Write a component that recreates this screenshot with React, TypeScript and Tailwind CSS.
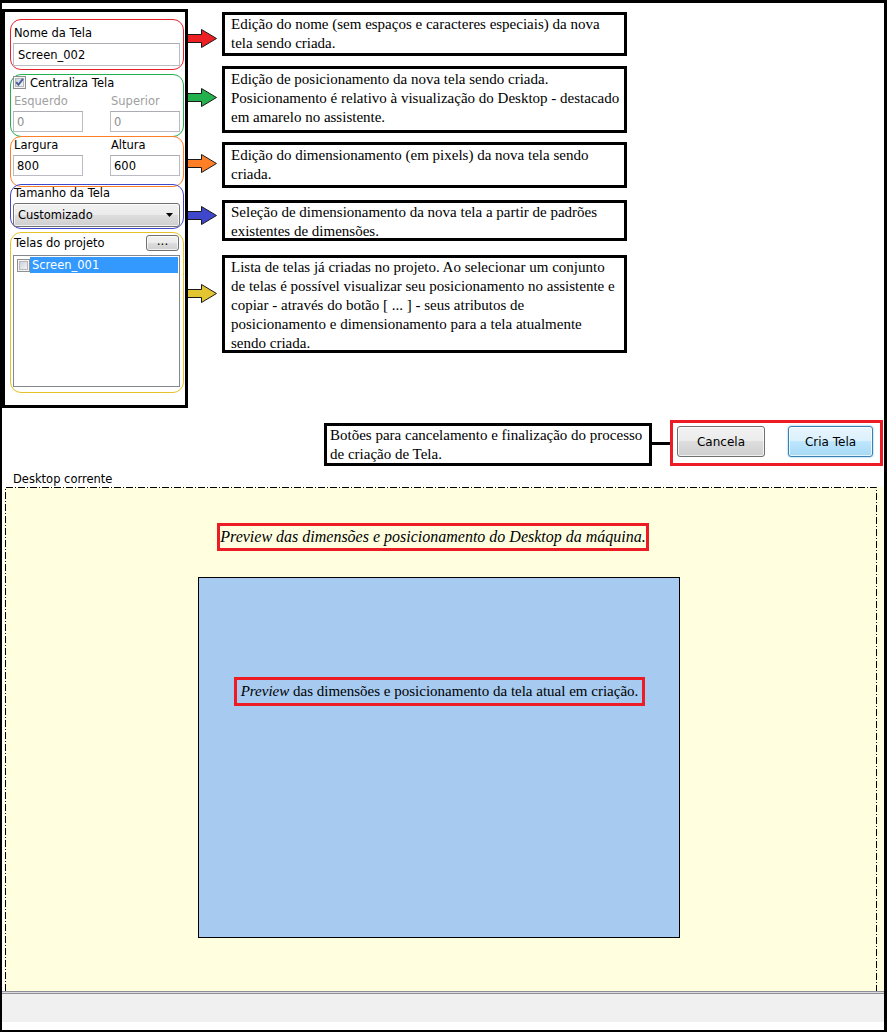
import React from "react";

const SANS = "font-['DejaVu_Sans',sans-serif]";
const SERIF = "font-['Liberation_Serif','Times_New_Roman',serif]";

function Arrow({ color }: { color: string }) {
  return (
    <svg width="29" height="19" viewBox="0 0 29 19" className="shrink-0 block">
      <path
        d="M0 5.5 H13.5 V0.5 L28.5 9.5 L13.5 18.5 V13.5 H0"
        fill={color}
        stroke="#1a1a1a"
        strokeWidth="1"
      />
    </svg>
  );
}

function CheckBox({ checked, id }: { checked?: boolean; id: string }) {
  return (
    <svg width="13" height="13" viewBox="0 0 13 13" className="shrink-0 block">
      <defs>
        <linearGradient id={id} x1="0" y1="0" x2="1" y2="1">
          <stop offset="0" stopColor="#cbcfd5" />
          <stop offset="1" stopColor="#f6f6f6" />
        </linearGradient>
      </defs>
      <rect x="0.5" y="0.5" width="12" height="12" fill="#f4f4f4" stroke="#8e8f8f" />
      <rect x="2.5" y="2.5" width="8" height="8" fill={`url(#${id})`} stroke="#b4b8be" />
      {checked && (
        <path d="M3.2 6.2 L5.4 8.8 L10 2.8" stroke="#4a5f9a" strokeWidth="1.9" fill="none" />
      )}
    </svg>
  );
}

function TextInput({ value, disabled, className }: { value: string; disabled?: boolean; className: string }) {
  return (
    <div
      className={`border border-[#b9bcc2] border-t-[#abadb3] bg-white flex items-center pl-[3px] text-[11.5px] ${
        disabled ? "text-[#8d8d8d]" : "text-black"
      } ${className}`}
    >
      {value}
    </div>
  );
}

const grayButton =
  "border border-[#707070] rounded-[3px] bg-[linear-gradient(#f2f2f2_0%,#ebebeb_50%,#dddddd_50%,#cfcfcf_100%)] shadow-[inset_0_0_0_1px_rgba(255,255,255,0.7)]";

function LeftPanel() {
  return (
    <div className={`mt-[6px] w-[186px] h-[399px] border-[3px] border-black flex flex-col pl-[5px] text-[11.5px] leading-[14px] ${SANS}`}>
      {/* Nome da Tela */}
      <div className="mt-[7px] w-[174px] h-[51px] border border-[#e8222a] rounded-[11px] pl-[2px] pt-[6px] shrink-0">
        <div className="pl-[1px]">Nome da Tela</div>
        <TextInput value="Screen_002" className="mt-[3px] w-[167px] h-[23px] pl-[4px]" />
      </div>

      {/* Posicionamento */}
      <div className="mt-[4px] w-[174px] h-[63px] border border-[#22b14c] rounded-[11px] pl-[2px] pt-[1px] shrink-0">
        <div className="flex items-center gap-[4px] h-[13px]">
          <CheckBox checked id="cbCentraliza" />
          <span>Centraliza Tela</span>
        </div>
        <div className="mt-[5px] grid grid-cols-[70px_70px] gap-x-[27px] text-[#a0a0a0]">
          <div className="pl-[1px]">Esquerdo</div>
          <div className="pl-[1px]">Superior</div>
        </div>
        <div className="mt-[3px] grid grid-cols-[70px_70px] gap-x-[27px]">
          <TextInput value="0" disabled className="h-[21px]" />
          <TextInput value="0" disabled className="h-[21px]" />
        </div>
      </div>

      {/* Dimensões */}
      <div className="-mt-[1px] w-[174px] h-[51px] border border-[#ff7f27] rounded-[11px] pl-[2px] pt-[1px] shrink-0">
        <div className="grid grid-cols-[70px_70px] gap-x-[27px]">
          <div className="pl-[1px]">Largura</div>
          <div className="pl-[1px]">Altura</div>
        </div>
        <div className="mt-[3px] grid grid-cols-[70px_70px] gap-x-[27px]">
          <TextInput value="800" className="h-[21px]" />
          <TextInput value="600" className="h-[21px]" />
        </div>
      </div>

      {/* Tamanho da Tela */}
      <div className="-mt-[3px] w-[174px] h-[45px] border border-[#3f48cc] rounded-[11px] pl-[2px] pt-[1px] shrink-0">
        <div className="pl-[1px]">Tamanho da Tela</div>
        <div className={`mt-[3px] w-[167px] h-[24px] flex items-center justify-between pl-[4px] pr-[6px] ${grayButton}`}>
          <span>Customizado</span>
          <svg width="7" height="4" viewBox="0 0 7 4" className="block">
            <path d="M0 0 H7 L3.5 4 Z" fill="#000" />
          </svg>
        </div>
      </div>

      {/* Telas do projeto */}
      <div className="mt-[3px] w-[174px] h-[161px] border border-[#e6c229] rounded-[11px] pl-[2px] pr-[4px] pt-[2px] shrink-0">
        <div className="flex items-center justify-between h-[16px]">
          <span className="pl-[1px]">Telas do projeto</span>
          <div className={`w-[33px] h-[16px] flex items-center justify-center text-[12px] leading-none pb-[4px] ${grayButton}`}>
            ...
          </div>
        </div>
        <div className="mt-[4px] w-[167px] h-[132px] border border-[#828790] bg-white pt-[1px] pl-[3px]">
          <div className="flex items-center">
            <CheckBox id="cbScreen001" />
            <div className="w-[148px] h-[16px] bg-[#3399ff] text-white pl-[2px] flex items-center">Screen_001</div>
          </div>
        </div>
      </div>
    </div>
  );
}

function Note({
  color,
  arrowTop,
  mt,
  h,
  pt,
  lines,
}: {
  color: string;
  arrowTop: number;
  mt: string;
  h: string;
  pt: string;
  lines: string[];
}) {
  return (
    <div className={`flex gap-[5px] ${mt}`}>
      <div style={{ marginTop: arrowTop }}>
        <Arrow color={color} />
      </div>
      <div className={`w-[405px] ${h} ${pt} border-[3px] border-black bg-white pl-[6px] text-[15px] leading-[19px] text-black whitespace-nowrap ${SERIF}`}>
        {lines.map((l, i) => (
          <div key={i}>{l}</div>
        ))}
      </div>
    </div>
  );
}

export default function App() {
  return (
    <div className="w-[887px] h-[1032px] bg-white border-t-[3px] border-r-[3px] border-b-2 border-l-2 border-black flex flex-col overflow-hidden">
      {/* Form and field descriptions */}
      <div className="flex h-[407px] shrink-0">
        <LeftPanel />
        <div className="flex flex-col pt-[9px]">
          <Note
            color="#ed2024"
            arrowTop={17}
            mt=""
            h="h-[44px]"
            pt="pt-0"
            lines={["Edição do nome (sem espaços e caracteres especiais) da nova", "tela sendo criada."]}
          />
          <Note
            color="#22b14c"
            arrowTop={22}
            mt="mt-[10px]"
            h="h-[67px]"
            pt="pt-[1px]"
            lines={[
              "Edição de posicionamento da nova tela sendo criada.",
              "Posicionamento é relativo à visualização do Desktop - destacado",
              "em amarelo no assistente.",
            ]}
          />
          <Note
            color="#ff7f27"
            arrowTop={12}
            mt="mt-[9px]"
            h="h-[46px]"
            pt="pt-[1px]"
            lines={["Edição do dimensionamento (em pixels) da nova tela sendo", "criada."]}
          />
          <Note
            color="#3f48cc"
            arrowTop={6}
            mt="mt-[12px]"
            h="h-[41px]"
            pt="pt-0"
            lines={["Seleção de dimensionamento da nova tela a partir de padrões", "existentes de dimensões."]}
          />
          <Note
            color="#e2c530"
            arrowTop={29}
            mt="mt-[14px]"
            h="h-[98px]"
            pt="pt-0"
            lines={[
              "Lista de telas já criadas no projeto. Ao selecionar um conjunto",
              "de telas é possível visualizar seu posicionamento no assistente e",
              "copiar - através do botão [ ... ] - seus atributos de",
              "posicionamento e dimensionamento para a tela atualmente",
              "sendo criada.",
            ]}
          />
        </div>
      </div>

      {/* Action buttons */}
      <div className="flex h-[46px] mt-[10px] pl-[322px] shrink-0">
        <div className={`mt-[3px] w-[328px] h-[43px] border-[3px] border-black pl-[3px] text-[15px] leading-[19px] whitespace-nowrap ${SERIF}`}>
          <div>Botões para cancelamento e finalização do processo</div>
          <div>de criação de Tela.</div>
        </div>
        <div className="mt-[22px] w-[18px] h-[3px] bg-black" />
        <div className={`w-[213px] h-[46px] border-[3px] border-[#ed1c24] flex items-start pt-[3px] pl-[4px] text-[12px] ${SANS}`}>
          <div className={`w-[88px] h-[31px] flex items-center justify-center ${grayButton}`}>Cancela</div>
          <div className="ml-[23px] w-[85px] h-[31px] flex items-center justify-center border border-[#3c7fb1] rounded-[3px] bg-[linear-gradient(#eaf6fd_0%,#d9f0fc_50%,#bee6fd_50%,#a7d9f5_100%)] shadow-[inset_0_0_0_1px_rgba(255,255,255,0.7),0_0_2px_#5cb4ea]">
            Cria Tela
          </div>
        </div>
      </div>

      {/* Desktop preview */}
      <div className={`h-[21px] pt-[6px] pl-[11px] text-[11.5px] leading-[14px] shrink-0 ${SANS}`}>Desktop corrente</div>
      <div className="relative ml-[2px] h-[504px] bg-[#ffffe0] shrink-0 flex flex-col items-start">
        <svg className="absolute inset-0 pointer-events-none" width="880" height="504">
          <path
            d="M1.5 504 V0.5 H872.5 V504"
            fill="none"
            stroke="#000"
            strokeWidth="1"
            strokeDasharray="7 2 1 2"
          />
        </svg>
        <div className={`ml-[213px] mt-[36px] w-[432px] h-[28px] border-[3px] border-[#ed1c24] flex items-center justify-center italic text-[16px] whitespace-nowrap ${SERIF}`}>
          Preview das dimensões e posicionamento do Desktop da máquina.
        </div>
        <div className="ml-[194px] mt-[26px] w-[482px] h-[361px] border border-black bg-[#a6caf0] flex flex-col items-start">
          <div className={`ml-[35px] mt-[99px] w-[411px] h-[29px] border-[3px] border-[#ed1c24] flex items-center justify-center text-[15px] whitespace-nowrap ${SERIF}`}>
            <span>
              <i>Preview</i> das dimensões e posicionamento da tela atual em criação.
            </span>
          </div>
        </div>
      </div>

      {/* Status strip */}
      <div className="h-[39px] flex flex-col shrink-0">
        <div className="h-px bg-[#8e8f99]" />
        <div className="h-px bg-[#dcdce0]" />
        <div className="h-px bg-[#8e8f99]" />
        <div className="h-[28px] bg-[#f0f0f0]" />
        <div className="flex-1 bg-white" />
      </div>
    </div>
  );
}
